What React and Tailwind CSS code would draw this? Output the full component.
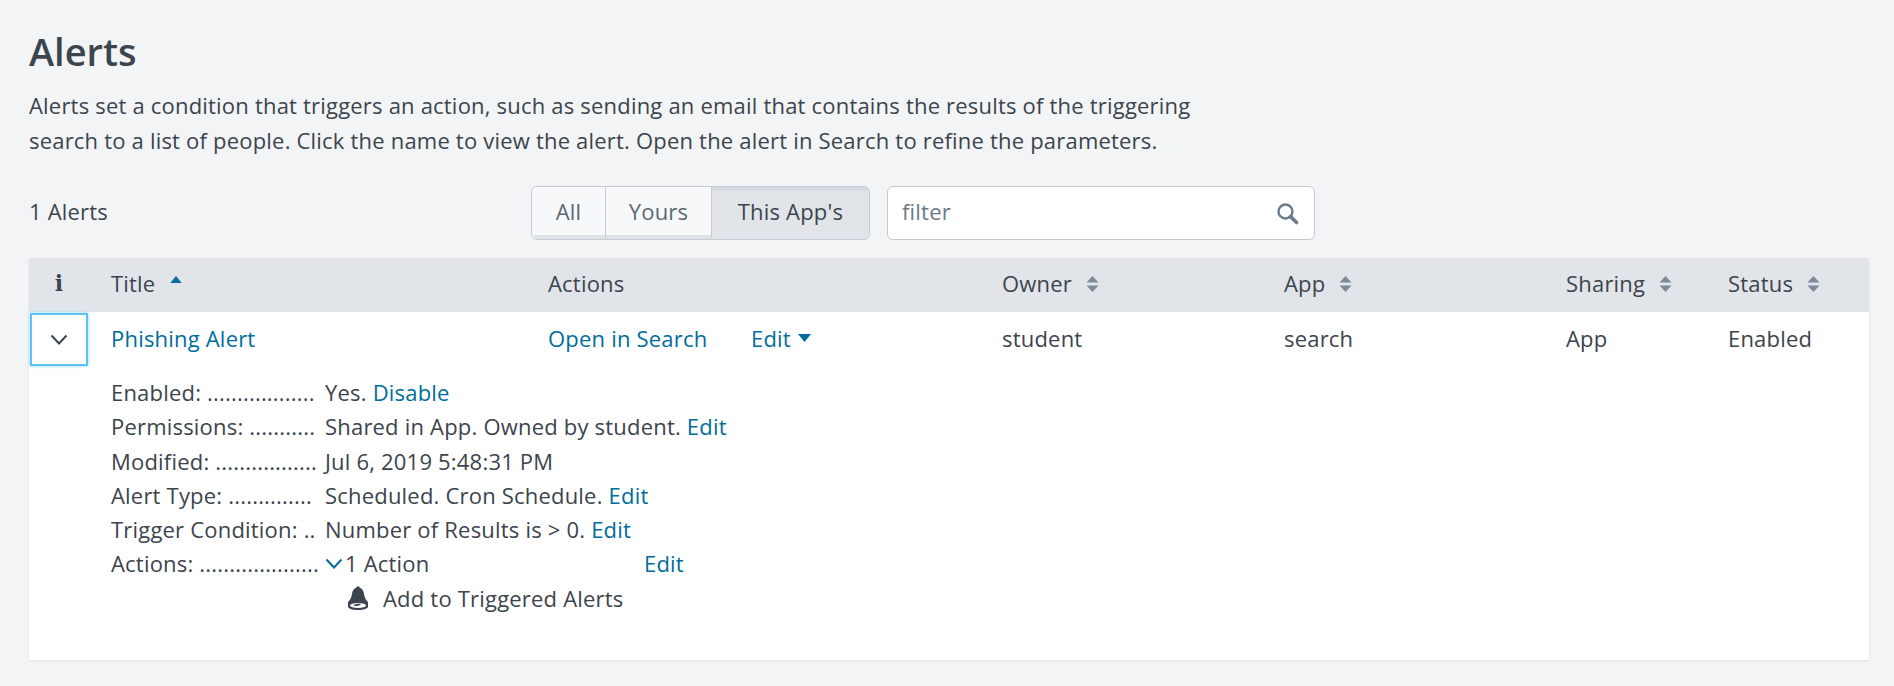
const font = { fontFamily: '"Open Sans", sans-serif' };

const SortIcon = () => (
  <svg width="13" height="18" viewBox="0 0 13 18" className="ml-[14px] fill-[#7d8a99]">
    <path d="M6.500 1 12.500 7.500H.5z" />
    <path d="M6.500 17 12.500 10.500H.5z" />
  </svg>
);

const SearchIcon = () => (
  <svg width="24" height="24" viewBox="0 0 24 24" fill="none" className="stroke-[#6b7a8c]">
    <circle cx="10.500" cy="10.500" r="7" strokeWidth="2.400" />
    <path d="M15.500 15.500 21.500 21.500" strokeWidth="3.600" strokeLinecap="round" />
  </svg>
);

const BellIcon = () => (
  <svg width="24" height="24" viewBox="0 0 24 24" className="fill-[#3c444d]">
    <circle cx="12" cy="2" r="1.800" />
    <path d="M12 1.500c4 0 5.500 3 6 6.500.5 3.200 1.500 5.500 4 8v4.500c0 2-4 3.500-10 3.500S2 22.500 2 20.500V16c2.500-2.500 3.500-4.800 4-8 .5-3.500 2-6.500 6-6.500z" />
    <ellipse cx="12" cy="19.500" rx="8" ry="2.500" fill="#fff" />
    <path d="M7 19.500c2-1.500 5-2 8-1.500-1 2-5 2.500-8 1.500z" />
  </svg>
);

const Chevron = ({ className }) => (
  <svg width="18" height="11" viewBox="0 0 18 11" fill="none" className={className}>
    <path d="M1.500 1.500 9 9.500 16.500 1.500" stroke="currentColor" strokeWidth="2" />
  </svg>
);

const Link = ({ children, className = "" }) => (
  <a className={`text-[#006d9c] ${className}`}>{children}</a>
);

const columns = [
  { label: "Title", width: "w-[437px]" },
  { label: "Actions", width: "w-[454px]" },
  { label: "Owner", width: "w-[282px]", sort: true },
  { label: "App", width: "w-[282px]", sort: true },
  { label: "Sharing", width: "w-[162px]", sort: true },
  { label: "Status", width: "flex-1", sort: true },
];

const details = [
  { label: "Enabled:", dots: 18, value: "Yes.", link: "Disable" },
  { label: "Permissions:", dots: 11, value: "Shared in App. Owned by student.", link: "Edit" },
  { label: "Modified:", dots: 17, value: "Jul 6, 2019 5:48:31 PM" },
  { label: "Alert Type:", dots: 14, value: "Scheduled. Cron Schedule.", link: "Edit" },
  { label: "Trigger Condition:", dots: 2, value: "Number of Results is > 0.", link: "Edit" },
];

const DetailLabel = ({ dots, children }) => (
  <div className="w-[214px] shrink-0 whitespace-nowrap">
    {children} {".".repeat(dots)}
  </div>
);

export default function App() {
  return (
    <div style={font} className="h-[686px] overflow-hidden bg-[#f2f4f5] pr-[25px] pl-[29px] text-[22px] tracking-[0.2px] text-[#3c444d]">
      <h1 className="pt-[29px] text-[38px] leading-[44px] font-semibold tracking-normal">Alerts</h1>
      <p className="mt-[15px] w-[1300px] leading-[35px]">
        Alerts set a condition that triggers an action, such as sending an email that contains the results of the triggering
        <br />
        search to a list of people. Click the name to view the alert. Open the alert in Search to refine the parameters.
      </p>

      <div className="mt-[28px] flex h-[54px] items-center">
        <div className="w-[502px] pb-[3px]">1 Alerts</div>
        <div className="flex h-[54px] w-[339px] overflow-hidden rounded-[6px] border border-[#c3cbd4] text-[#5c6773]">
          <button className="w-[74px] border-r border-b-[4px] border-r-[#c3cbd4] border-b-[#dfe3e8] bg-[#f7f8fa] pt-[1px]">All</button>
          <button className="w-[106px] border-r border-b-[4px] border-r-[#c3cbd4] border-b-[#dfe3e8] bg-[#f7f8fa] pt-[1px]">Yours</button>
          <button className="flex-1 border-t-[4px] border-t-[#d3dae1] bg-[#e1e5e9] pb-[7px] text-[#3c444d]">This App's</button>
        </div>
        <div className="ml-[17px] flex h-[54px] w-[428px] items-center justify-between rounded-[6px] border border-[#c3cbd4] bg-white pr-[15px] pl-[14px]">
          <span className="pb-[3px] text-[#6b7a8c]">filter</span>
          <SearchIcon />
        </div>
      </div>

      <div className="mt-[18px] bg-white shadow-[0_1px_2px_rgba(0,0,0,0.08)]">
        <div className="flex h-[54px] items-center bg-[#e1e5e9] pb-[3px]">
          <div className="flex w-[82px] justify-center pr-[22px] font-['DejaVu_Serif'] text-[22px] font-bold">i</div>
          {columns.map((col) => (
            <div key={col.label} className={`flex items-center ${col.width}`}>
              {col.label}
              {col.sort && <SortIcon />}
              {col.label === "Title" && (
                <svg width="12" height="7" viewBox="0 0 13 8" className="mb-[8px] ml-[15px] fill-[#006d9c]">
                  <path d="M6.500 0 13 8H0z" />
                </svg>
              )}
            </div>
          ))}
        </div>

        <div className="flex h-[54px] items-center">
          <div className="w-[82px] pl-[1px]">
            <button className="flex h-[53px] w-[58px] items-center justify-center border-[2px] border-[#5fc2f5] bg-white shadow-[0_0_3px_#7fd0f8]">
              <Chevron className="text-[#3c444d]" />
            </button>
          </div>
          <div className="w-[437px] pb-[2px]">
            <Link>Phishing Alert</Link>
          </div>
          <div className="flex w-[454px] items-center pb-[2px]">
            <Link className="w-[203px]">Open in Search</Link>
            <Link>Edit</Link>
            <svg width="13" height="8" viewBox="0 0 13 8" className="ml-[7px] fill-[#006d9c]">
              <path d="M0 0H13L6.500 8z" />
            </svg>
          </div>
          <div className="w-[282px] pb-[2px]">student</div>
          <div className="w-[282px] pb-[2px]">search</div>
          <div className="w-[162px] pb-[2px]">App</div>
          <div className="pb-[2px]">Enabled</div>
        </div>

        <div className="pt-[9px] pb-[45px] pl-[82px] leading-[34.3px]">
          {details.map((row) => (
            <div key={row.label} className="flex">
              <DetailLabel dots={row.dots}>{row.label}</DetailLabel>
              <div>
                {row.value} {row.link && <Link>{row.link}</Link>}
              </div>
            </div>
          ))}
          <div className="flex">
            <DetailLabel dots={20}>Actions:</DetailLabel>
            <div className="flex w-[319px] items-center gap-[2px]">
              <Chevron className="text-[#006d9c]" />
              <span>1 Action</span>
            </div>
            <Link>Edit</Link>
          </div>
          <div className="flex items-center pl-[235px]">
            <BellIcon />
            <span className="ml-[13px]">Add to Triggered Alerts</span>
          </div>
        </div>
      </div>
    </div>
  );
}
